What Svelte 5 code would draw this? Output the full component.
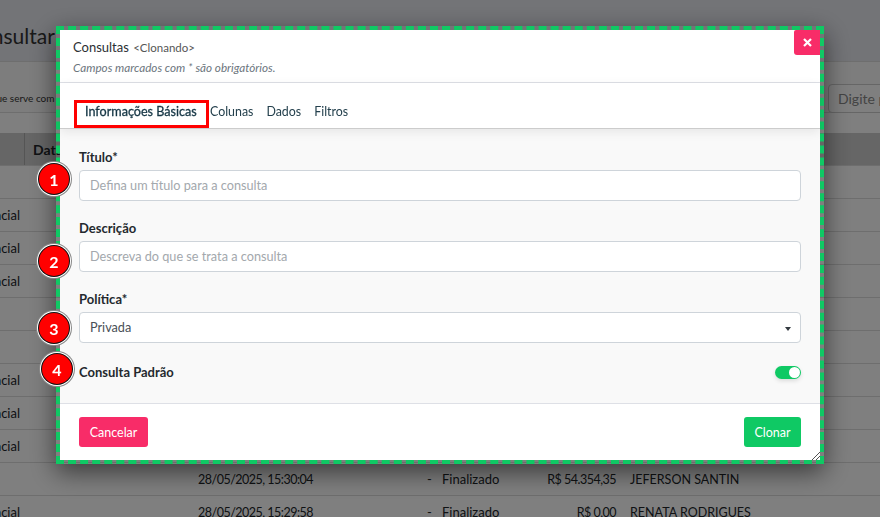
<script>
	let rows = [
		{ area: "" },
		{ area: "Financial" },
		{ area: "Financial" },
		{ area: "Financial" },
		{ area: "" },
		{ area: "" },
		{ area: "Financial" },
		{ area: "Financial" },
		{ area: "Financial" },
		{ area: "", date: "28/05/2025, 15:30:04", status: "Finalizado", value: "R$ 54.354,35", user: "JEFERSON SANTIN" },
		{ area: "Financial", date: "28/05/2025, 15:29:58", status: "Finalizado", value: "R$ 0,00", user: "RENATA RODRIGUES" }
	];
	let tabs = ["Colunas", "Dados", "Filtros"];
</script>

<div class="page">
	<header class="top"><h1>Consultar</h1></header>
	<div class="toolbar">
		<span class="hint">Pesquisa que serve com</span>
		<input class="search" placeholder="Digite p" />
	</div>
	<div class="table">
		<div class="row head">
			<div class="c0"></div>
			<div class="c1">Data</div>
		</div>
		{#each rows as r}
			<div class="row">
				<div class="c0">{r.area}</div>
				<div class="c1 date">{r.date ?? ""}</div>
				<div class="c2">{r.date ? "-" : ""}</div>
				<div class="c3">{r.status ?? ""}</div>
				<div class="c4">{r.value ?? ""}</div>
				<div class="c5">{r.user ?? ""}</div>
			</div>
		{/each}
	</div>
</div>

<div class="overlay"></div>

<div class="frame">
	<div class="modal">
		<button class="close" aria-label="Fechar">
			<svg width="9" height="9" viewBox="0 0 9 9"><path d="M1 1l7 7M8 1l-7 7" stroke="#fff" stroke-width="2.2" fill="none" /></svg>
		</button>
		<div class="m-head">
			<div class="title">Consultas <small>&lt;Clonando&gt;</small></div>
			<div class="note">Campos marcados com * são obrigatórios.</div>
		</div>
		<div class="m-tabs">
			<div class="tab-list">
				<div class="tab active">Informações Básicas</div>
				{#each tabs as t}
					<div class="tab">{t}</div>
				{/each}
			</div>
		</div>
		<div class="m-body">
			<label class="field">
				<span>Título*</span>
				<input placeholder="Defina um título para a consulta" />
			</label>
			<label class="field">
				<span>Descrição</span>
				<input placeholder="Descreva do que se trata a consulta" />
			</label>
			<label class="field">
				<span>Política*</span>
				<div class="select">Privada<i></i></div>
			</label>
			<div class="switch-row">
				<span>Consulta Padrão</span>
				<div class="switch"><b></b></div>
			</div>
		</div>
		<div class="m-foot">
			<button class="btn pink">Cancelar</button>
			<button class="btn green">Clonar</button>
		</div>
		<svg class="grip" width="8" height="8" viewBox="0 0 8 8"><path d="M0 8L8 0M4 8L8 4" stroke="#555" stroke-width="1" /></svg>
	</div>
</div>

<div class="badge" style="left:39px;top:164px">1</div>
<div class="badge" style="left:39px;top:246px">2</div>
<div class="badge" style="left:39px;top:313px">3</div>
<div class="badge" style="left:42px;top:354px">4</div>

<style>
	:global(body) {
		margin: 0;
		overflow: hidden;
		font-family: Lato, "Noto Sans", sans-serif;
		font-size: 13px;
		color: #212529;
		height: 517px;
	}

	.page {
		width: 880px;
		height: 517px;
		overflow: hidden;
		background: #fff;
	}

	.top {
		height: 62px;
		background: #e6e8ef;
		border-bottom: 1px solid #ddd;
		box-sizing: border-box;
		display: flex;
	}

	h1 {
		margin: 19px 0 0 -34px;
		font-size: 21px;
		line-height: 34px;
		font-weight: 400;
		color: #333;
		flex: none;
	}

	.toolbar {
		height: 51px;
		box-sizing: border-box;
		border-bottom: 1px solid #ddd;
		display: flex;
		align-items: center;
		justify-content: space-between;
		background: #fbfbfb;
	}

	.hint {
		font-size: 10px;
		margin-left: -50px;
		margin-top: 22px;
		color: #333;
		white-space: nowrap;
	}

	.search {
		width: 80px;
		height: 29px;
		box-sizing: border-box;
		margin: 22px -28px 0 0;
		border: 1px solid #ccc;
		border-radius: 4px;
		padding: 0 9px;
		font: inherit;
		font-size: 14px;
	}

	.search::placeholder {
		color: #888;
	}

	.table {
		margin-top: 20px;
	}

	.row {
		height: 33px;
		box-sizing: border-box;
		border-bottom: 1px solid #ddd;
		display: flex;
		align-items: center;
		white-space: nowrap;
	}

	.head {
		background: #ccc;
		font-weight: 700;
		font-size: 14px;
	}

	.c0 {
		width: 25px;
		flex: none;
		box-sizing: border-box;
		height: 100%;
		display: flex;
		align-items: center;
		justify-content: flex-end;
		padding-right: 5px;
	}

	.head .c0 {
		border-right: 1px solid #aaa;
	}

	.c1 {
		padding-left: 8px;
	}

	.date {
		width: 223px;
		flex: none;
		margin-left: 165px;
		padding-left: 8px;
		box-sizing: border-box;
		font-size: 12.5px;
		letter-spacing: -0.5px;
	}

	.c2 {
		width: 15px;
		flex: none;
		margin-left: 14px;
	}

	.c3 {
		width: 80px;
		flex: none;
	}

	.c4 {
		width: 94px;
		flex: none;
		text-align: right;
		font-size: 12.5px;
		letter-spacing: -0.5px;
	}

	.c5 {
		margin-left: 14px;
		font-size: 12.5px;
	}

	.overlay {
		position: fixed;
		inset: 0;
		background: rgba(0, 0, 0, 0.5);
	}

	.frame {
		position: fixed;
		left: 56px;
		top: 26px;
		width: 768px;
		height: 438px;
		box-sizing: border-box;
		border: 4px dashed #0fc964;
		box-shadow: 0 8px 24px rgba(0, 0, 0, 0.55);
	}

	.modal {
		position: relative;
		height: 100%;
		background: #fff;
		display: flex;
		flex-direction: column;
	}

	.close {
		position: absolute;
		right: 0;
		top: 0;
		width: 26px;
		height: 25px;
		padding: 0;
		border: 0;
		border-radius: 2px 0 0 3px;
		background: #f82c68;
		display: flex;
		align-items: center;
		justify-content: center;
	}

	.m-head {
		height: 53px;
		box-sizing: border-box;
		border-bottom: 1px solid #dee0e6;
		padding: 8px 13px 0;
	}

	.title {
		font-size: 13px;
		line-height: 18px;
		color: #2b2f33;
	}

	.title small {
		font-size: 11.5px;
		margin-left: 1px;
		color: #555;
	}

	.note {
		font-size: 11.7px;
		line-height: 14px;
		margin-top: 3px;
		font-style: italic;
		color: #6c757d;
	}

	.m-tabs {
		height: 46px;
		box-sizing: border-box;
		border-bottom: 1px solid #ccc;
		padding: 16px 0 0 14px;
		position: relative;
		z-index: 1;
		box-shadow: 0 3px 10px rgba(0, 0, 0, 0.08);
		background: #fff;
	}

	.tab-list {
		display: inline-flex;
		height: 29px;
		align-items: center;
		gap: 13px;
		box-sizing: border-box;
		color: #24404d;
		font-size: 12.4px;
		white-space: nowrap;
	}

	.tab {
		padding-bottom: 5px;
	}

	.tab.active {
		width: 135px;
		height: 28px;
		box-sizing: border-box;
		border: 3px solid #f00;
		margin-right: -12px;
		display: flex;
		align-items: center;
		padding: 0 0 4px 8px;
		color: #153645;
		font-size: 12.6px;
		-webkit-text-stroke: 0.3px #153645;
	}

	.m-body {
		flex: 1;
		background: #f9f9f9;
		padding: 19px 19px 0;
		display: flex;
		flex-direction: column;
		gap: 18px;
	}

	.field {
		display: flex;
		flex-direction: column;
		gap: 4px;
	}

	.field span,
	.switch-row span {
		font-size: 13px;
		line-height: 18px;
		font-weight: 700;
		color: #24292e;
	}

	.field input,
	.select {
		height: 31px;
		box-sizing: border-box;
		background: #fff;
		border: 1px solid #ced4da;
		border-radius: 4px;
		padding: 0 10px 2px;
		font: inherit;
		font-size: 12.7px;
		color: #495057;
		display: flex;
		align-items: center;
		position: relative;
		outline: none;
	}

	.field input::placeholder {
		color: #a3a8ad;
	}

	.select i {
		position: absolute;
		right: 9px;
		top: 14px;
		border: 3px solid transparent;
		border-top: 4px solid #343a40;
		border-bottom: 0;
	}

	.switch-row {
		display: flex;
		align-items: center;
		justify-content: space-between;
		margin-top: 2px;
	}

	.switch {
		width: 26px;
		height: 13px;
		border-radius: 7px;
		background: #0fc964;
		display: flex;
		justify-content: flex-end;
		align-items: center;
		padding-right: 1px;
		box-sizing: border-box;
		box-shadow: 0 2px 4px rgba(0, 0, 0, 0.12);
	}

	.switch b {
		width: 11px;
		height: 11px;
		border-radius: 50%;
		background: #fff;
	}

	.m-foot {
		height: 57px;
		box-sizing: border-box;
		border-top: 1px solid #dee0e6;
		padding: 13px 19px 0;
		display: flex;
		justify-content: space-between;
		align-items: flex-start;
	}

	.btn {
		height: 30px;
		border: 0;
		border-radius: 3px;
		color: #fff;
		font: inherit;
		font-size: 12.5px;
		padding: 0;
	}

	.pink {
		width: 69px;
		background: #f82c68;
	}

	.green {
		width: 57px;
		background: #0fc964;
	}

	.grip {
		position: absolute;
		right: 0;
		bottom: 0;
	}

	.badge {
		position: fixed;
		width: 30px;
		height: 30px;
		border-radius: 50%;
		background: #f00;
		color: #fff;
		font-weight: 700;
		font-size: 16px;
		display: flex;
		align-items: center;
		justify-content: center;
		box-shadow: 0 0 0 1px #111, 0 0 0 2px #fff, 0 0 0 3px #888;
	}
</style>
